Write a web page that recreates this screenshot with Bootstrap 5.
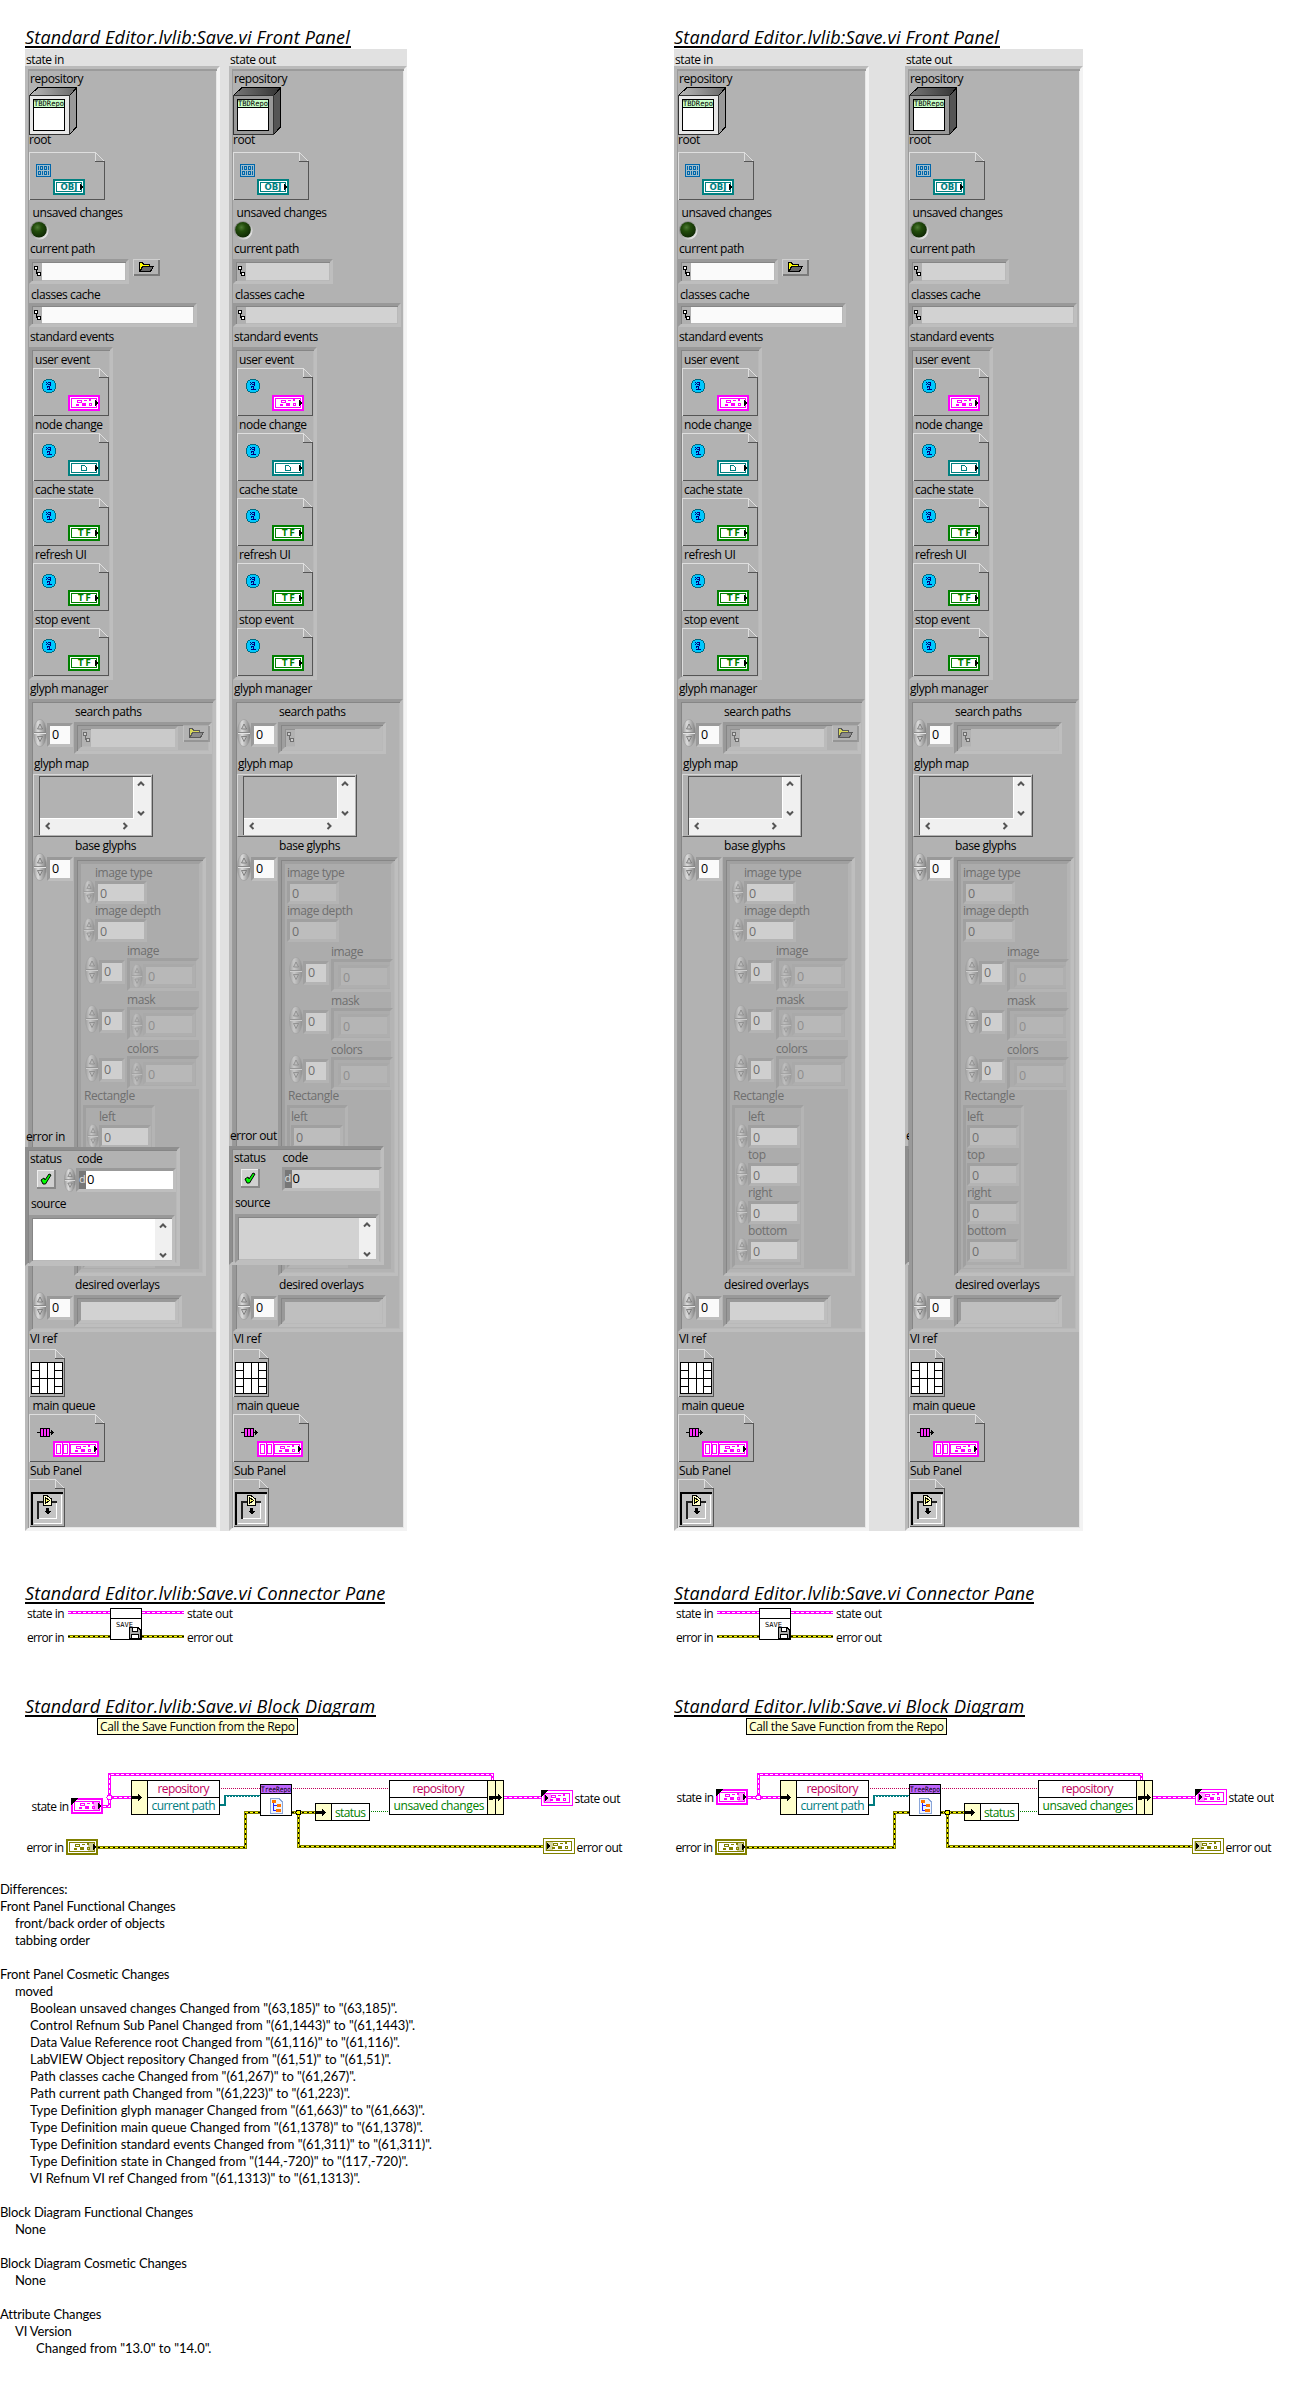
<!DOCTYPE html>
<html lang="en">
<head>
<meta charset="utf-8">
<title>Standard Editor.lvlib:Save.vi</title>
<link href="https://cdn.jsdelivr.net/npm/bootstrap@5.3.0/dist/css/bootstrap.min.css" rel="stylesheet">
<style>
body{font-family:"Open Sans","Noto Sans",sans-serif;font-size:12px;line-height:12px;color:#000}
.side{width:649px;padding-left:25px;flex:none}
.vi-title{font:italic 18px/18px "Open Sans",sans-serif;letter-spacing:.2px;border-bottom:2px solid #000;margin:0;white-space:nowrap}
.title-fp{width:326px;margin-top:28px;margin-bottom:1px}
.title-cp{width:360px;margin-top:53px}
.title-bd{width:351px;margin-top:33px;overflow:hidden}
.canvas{background:#e1e1e1;height:1482px}
.canvas.near{width:382px;gap:9px}
.canvas.far{width:409px;gap:36px}
.cluster-col{padding-top:4px}
.cap{height:12px;line-height:14px;white-space:nowrap;letter-spacing:-.42px;flex:none}
.cluster-col>.cap{padding-left:1px;margin-bottom:1px}
.panel{height:1465px;border:3px solid;border-color:#bababa #f3f3f3 #f3f3f3 #bababa;box-shadow:inset 1px 2px 0 #9b9b9b,inset -1px -1px 0 #e6e6e6;background:#b2b2b2;padding:1px;position:relative}
.panel.in{width:195px}.panel.out{width:178px}
.sp-1{margin-top:1px}.sp-2{margin-top:2px}.sp-3{margin-top:3px}.sp-4{margin-top:4px}.sp-5{margin-top:5px}.sp-6{margin-top:6px}.sp-7{margin-top:7px}
.in-0{padding-left:0}.in-1{padding-left:1px}.in-2{padding-left:2px}.in-3{padding-left:3.5px}.in-12{padding-left:12px}.in-42{padding-left:42px}.in-44{padding-left:44px}
svg{display:block;flex:none}
.obj{height:48px;flex:none}
.obj.cube{height:46px}
.led{height:20px}
.well{border:3px solid;border-color:#999 #bebebe #bebebe #999;box-shadow:inset 1px 1px 0 #868686,inset -1px -1px 0 #b9b9b9;flex:none}
.well-body{padding:1px}
.fld{background:#fafafa;white-space:nowrap;overflow:hidden}
.out .fld{background:#d2d2d2}
.pathctl{width:100px;height:25px}.pathctl.wide{width:168px;height:24px}
.pathctl .tag{width:9px;background:#b0b0b0;padding:3px 0 0 1px;margin:1px 0 0 1px}
.pathctl .fld{margin:1px 1px 1px 0}
.events{width:84px;height:333px}
.gm{height:633px}
.arr{height:36px}
.idx{width:26px;height:24px;margin-top:4px;border:3px solid;border-color:#999 #bebebe #bebebe #999;background:#fafafa;padding:3px 0 0 2px;letter-spacing:-.4px;font-size:12.5px;flex:none}
.arr-frame{margin:3px 0 0 1px;height:32px;width:108px}
.arr-frame.btn-room{width:138px}
.arr-frame .well{margin:1px;width:100px;height:24px}
.arr-frame .fld{background:#d2d2d2;flex:1 1 auto}
.out .arr-frame .fld{background:#bfbfbf}
.arr-frame .tag{width:10px;padding:3px 0 0 2px}
.map{width:120px;height:63px;border:1px solid;border-color:#d8d8d8 #555 #555 #d8d8d8;padding:1px 2px 2px 5px}
.map-in{border:solid #555;border-width:1px 0 0 1px;height:59px;width:112px;background:#f0f0f0}
.map-view{width:93px;height:41px;background:#b2b2b2;border-right:1px solid #fff;border-bottom:1px solid #fff;box-sizing:content-box}
.bg-row{height:423px}
.bg-frame{margin:4px 0 0 1px;height:419px;width:132px;background:#acacac}
.out .bg-frame{width:120px}
.bg-frame>.well{margin:1px;height:411px;padding-left:2px;border-color:#a0a0a0 #b8b8b8 #b8b8b8 #a0a0a0;box-shadow:none}
.dim .cap,.dim .num{color:#6f6f6f}
.dim .well,.dim .num,.dim .idx{border-color:#a0a0a0 #b4b4b4 #b4b4b4 #a0a0a0;box-shadow:none}
.dim .nrow svg,.dim .sub-arr>svg{opacity:.6}
.nrow{height:24px}
.num{width:52px;height:23px;margin-top:1px;border:3px solid;background:#cfcfcf;padding:4px 0 0 2px;flex:none;font-size:12.5px}
.out .dim .num{background:#bdbdbd}
.arrays{height:147px;padding-top:2px}
.out .arrays{padding-top:3px}
.dim .idx{background:#cfcfcf;color:#6f6f6f}
.sub-arr{height:36px;margin-bottom:1px;padding-left:2px}
.sub-frame{width:72px;height:33px;margin:2px 0 0 2px;padding:3px 0 0 1px;background:#acacac}
.out .sub-frame{width:62px;padding-left:0}
.sub-frame .num{margin-top:0;height:23px;background:#b8b8b8;color:#8e8e8e;border-color:#a9a9a9 #afafaf #afafaf #a9a9a9}
.out .dim .sub-frame .num{background:#b5b5b5}
.sub-frame svg{opacity:.4}
.rect{width:72px;height:163px}
.out .rect{width:61px}
.rect .well-body{padding:2px 1px}
.overlay{position:absolute;left:-3px;top:1061px;width:155px;z-index:2}
.out .overlay{top:1060px}
.overlay.peek{width:4px;overflow:hidden}
.err{width:155px;height:119px;margin-top:5px;background:#b2b2b2;border-color:#8e8e8e #bebebe #bebebe #8e8e8e;padding:2px 0 0 1px}
.err-top{height:41px}
.e-status{width:35px;padding-left:1px}
.out .e-status{width:37px}
.codectl{width:100px;height:24px;margin-top:4px}
.codectl .tag{width:7px;background:#777;color:#ddd;font-size:11px;line-height:16px}
.codectl .fld{background:#fff;font-size:13px;line-height:17px;padding-left:1px}
.out .codectl .fld{background:#d2d2d2}
.source{width:146px;height:49px;margin-top:6px;background:#fff}
.out .source{background:#d2d2d2;margin-left:2px;width:144px}
.report{font:13px/17px Lato,sans-serif;letter-spacing:-.15px;height:511px;white-space:nowrap;padding-top:1px}
.ind{padding-left:15px}
.ind .ind{letter-spacing:-.03px}
.ind-x{padding-left:21px;letter-spacing:0}
</style>
</head>
<body class="bg-white overflow-hidden">
<svg width="0" height="0" class="position-absolute" shape-rendering="crispEdges">
<defs>
<linearGradient id="metal" x1="0" x2="1"><stop offset="0" stop-color="#989898"/><stop offset=".35" stop-color="#dcdcdc"/><stop offset="1" stop-color="#7c7c7c"/></linearGradient>
<linearGradient id="topL" x1="0" x2="1"><stop offset="0" stop-color="#bbb"/><stop offset="1" stop-color="#666"/></linearGradient>
<linearGradient id="topD" x1="0" x2="1"><stop offset="0" stop-color="#777"/><stop offset="1" stop-color="#333"/></linearGradient>
<radialGradient id="ledg" cx=".4" cy=".35" r=".65"><stop offset="0" stop-color="#4d7a33"/><stop offset=".4" stop-color="#234d0c"/><stop offset="1" stop-color="#102a04"/></radialGradient>
<linearGradient id="ledr" x1="0" y1="0" x2="1" y2="1"><stop offset="0" stop-color="#777"/><stop offset=".5" stop-color="#aaa"/><stop offset="1" stop-color="#fff"/></linearGradient>
<symbol id="spin" viewBox="0 0 14 28"><g shape-rendering="auto"><ellipse cx="7" cy="14" rx="6.6" ry="13.6" fill="url(#metal)" stroke="#999" stroke-width=".6"/><path d="M1 13.5H13" stroke="#888"/><path d="M1 14.5H13" stroke="#e4e4e4"/><path d="M7 5L9.500 10H4.500Z" fill="#c6c6c6" stroke="#666" stroke-width=".7"/><path d="M4.500 17.500H9.500L7 22.500Z" fill="#c6c6c6" stroke="#666" stroke-width=".7"/></g></symbol>
<symbol id="pth" viewBox="0 0 7 11"><path d="M.5.5h3v3h-3zM3.500 6.500h3v3h-3zM2.500 4v3.500h1" fill="#fff" stroke="#000"/></symbol>
<symbol id="folder" viewBox="0 0 27 17"><path d="M0 0H27V17H0Z" fill="#b4b4b4"/><path d="M0 .5H27M.5 0V17" stroke="#cfcfcf"/><path d="M1 16H27M26 1V17" stroke="#7a7a7a" stroke-width="2"/><path d="M6.500 12.500V3.500H9.500L10.500 5.500H16.500V7" fill="#ff0" stroke="#000"/><path d="M7 12.500L9.500 7.500H20.500L17.500 12.500Z" fill="#666" stroke="#000"/></symbol>
<symbol id="page76" viewBox="0 0 76 48"><path d="M.5 48V.5H66.500V9.500M66.500 .5L75.500 9.500" fill="none" stroke="#dedede"/><path d="M66 9.500H75.500V47.500H1" fill="none" stroke="#555"/></symbol>
<symbol id="page36" viewBox="0 0 36 48"><path d="M.5 48V.5H26.500V9.500M26.500 .5L35.500 9.500" fill="none" stroke="#dedede"/><path d="M26 9.500H35.500V47.500H1" fill="none" stroke="#555"/></symbol>
<symbol id="box" viewBox="0 0 32 16"><path d="M0 0H32V16H0Z" fill="currentColor"/><path d="M2 2H30V14H2Z" fill="#fff"/><path d="M3.500 3.500H28.500V12.500H3.500Z" fill="#fff" stroke="currentColor"/></symbol>
<symbol id="arw" viewBox="0 0 3 6"><path d="M0 0H1V1H2V2H3V4H2V5H1V6H0Z"/></symbol>
<symbol id="bits" viewBox="0 0 16 8"><path d="M1 1h5v3h-5zM2 2v1h3v-1zM8 1h3v1h-3zM13 0h2v2h-2zM13 4h3v3h-3zM14 5v1h1v-1zM6 4h4v3h-4zM0 5h3v2h-3z" fill="currentColor" fill-rule="evenodd"/></symbol>
<symbol id="evt" viewBox="0 0 14 14"><path d="M4 0H10V1H12V2H13V4H14V10H13V12H12V13H10V14H4V13H2V12H1V10H0V4H1V2H2V1H4Z" fill="#006a80"/><path d="M4 1H10V2H12V4H13V10H12V12H10V13H4V12H2V10H1V4H2V2H4Z" fill="#00c8ff"/><path d="M4 3h1v1h-1zM5 4h1v1h-1zM4 5h1v1h-1zM6 3h3v1h-3zM8 4h1v3h-1zM6 5h2v1h-2zM5 7h3v1h-3zM5 8h1v1h-1zM7 8h1v3h-1zM5 10h5v1h-5z" fill="#000080"/></symbol>
<symbol id="t-clu" viewBox="0 0 32 16"><g color="#f0f"><use href="#box" width="32" height="16"/><use href="#bits" x="8" y="4" width="16" height="8"/></g><use href="#arw" x="27" y="5" width="3" height="6"/></symbol>
<symbol id="t-ref" viewBox="0 0 32 16"><g color="#008080"><use href="#box" width="32" height="16"/><path d="M13.500 5.500H16.500L18.500 7.500V10.500H13.500Z" fill="none" stroke="#008080"/></g><use href="#arw" x="27" y="5" width="3" height="6"/></symbol>
<symbol id="t-tf" viewBox="0 0 32 16"><g color="#008000"><use href="#box" width="32" height="16"/></g><text x="10" y="11" font-family="DejaVu Sans" font-weight="bold" font-size="8" fill="#008000" textLength="13">TF</text><use href="#arw" x="27" y="5" width="3" height="6"/></symbol>
<symbol id="t-obj" viewBox="0 0 32 16"><g color="#008080"><use href="#box" width="32" height="16"/></g><text x="7.500" y="11" font-family="DejaVu Sans" font-weight="bold" font-size="8" fill="#008080" textLength="17" lengthAdjust="spacingAndGlyphs">OBJ</text><use href="#arw" x="27" y="5" width="3" height="6"/></symbol>
<symbol id="t-in" viewBox="0 0 32 16"><use href="#box" width="32" height="16"/><use href="#bits" x="8" y="4" width="16" height="8"/><path d="M22 3H29V13H22Z" fill="currentColor" opacity=".4"/><use href="#arw" x="27" y="5" width="3" height="6"/></symbol>
<symbol id="t-out" viewBox="0 0 32 16"><path d="M.5.5H31.500V15.500H.5ZM3.500 3.500H28.500V12.500H3.500Z" fill="#fff" stroke="currentColor"/><use href="#bits" x="9" y="4" width="16" height="8"/><path d="M2 3H10V13H2Z" fill="currentColor" opacity=".35"/><use href="#arw" x="4" y="5" width="3" height="6"/></symbol>
<symbol id="up" viewBox="0 0 8 6"><path d="M1 5L4 2L7 5" fill="none" stroke="#555" stroke-width="2" shape-rendering="auto"/></symbol>
<symbol id="save" viewBox="0 0 32 32"><path d="M.5.5H31.500V31.500H.5ZM0 10.500H32" fill="#fff" stroke="#000"/><text x="6" y="19" font-family="DejaVu Sans Mono" font-size="7" textLength="17" lengthAdjust="spacingAndGlyphs">SAVE</text><path d="M19.500 19.500H28L30.500 22V30.500H19.500Z" fill="#aaa" stroke="#000"/><path d="M22.500 19.500H27.500V23.500H22.500ZM21.500 26.500H28.500V30.500H21.500Z" fill="#fff" stroke="#000"/></symbol>
<symbol id="tree" viewBox="0 0 32 32"><path d="M.5.5H31.500V31.500H.5Z" fill="#fff" stroke="#000"/><path d="M1 1H31V9H1Z" fill="#bf66ff"/><path d="M0 9.500H32" stroke="#000"/><text x="1" y="8" font-family="DejaVu Sans Mono" font-size="7.500" textLength="30" lengthAdjust="spacingAndGlyphs">TreeRepo</text><path d="M10.500 14.500H19L22.500 18V29.500H10.500Z" fill="#eef4ff" stroke="#8aa6d8"/><path d="M13.500 17V26.500H17M13.500 21.500H17" fill="none" stroke="#22f"/><path d="M12 16h4v3h-4zM17 19.500h4v3.500h-4zM16 25h5v3h-5z" fill="#f70"/></symbol>
</defs>
</svg>

<div id="compare" class="d-flex"></div>

<div class="report">
<div>Differences:</div>
<div>Front Panel Functional Changes</div>
<div class="ind"><div>front/back order of objects</div><div>tabbing order</div></div>
<br>
<div>Front Panel Cosmetic Changes</div>
<div class="ind"><div>moved</div>
<div class="ind">
<div>Boolean unsaved changes Changed from "(63,185)" to "(63,185)".</div>
<div>Control Refnum Sub Panel Changed from "(61,1443)" to "(61,1443)".</div>
<div>Data Value Reference root Changed from "(61,116)" to "(61,116)".</div>
<div>LabVIEW Object repository Changed from "(61,51)" to "(61,51)".</div>
<div>Path classes cache Changed from "(61,267)" to "(61,267)".</div>
<div>Path current path Changed from "(61,223)" to "(61,223)".</div>
<div>Type Definition glyph manager Changed from "(61,663)" to "(61,663)".</div>
<div>Type Definition main queue Changed from "(61,1378)" to "(61,1378)".</div>
<div>Type Definition standard events Changed from "(61,311)" to "(61,311)".</div>
<div>Type Definition state in Changed from "(144,-720)" to "(117,-720)".</div>
<div>VI Refnum VI ref Changed from "(61,1313)" to "(61,1313)".</div>
</div></div>
<br>
<div>Block Diagram Functional Changes</div>
<div class="ind">None</div>
<br>
<div>Block Diagram Cosmetic Changes</div>
<div class="ind">None</div>
<br>
<div>Attribute Changes</div>
<div class="ind"><div>VI Version</div><div class="ind-x">Changed from "13.0" to "14.0".</div></div>
</div>

<script src="https://cdn.jsdelivr.net/npm/bootstrap@5.3.0/dist/js/bootstrap.bundle.min.js"></script>
<script>
const svg = (w, h, body, cls = '') => `<svg width="${w}" height="${h}" viewBox="0 0 ${w} ${h}" shape-rendering="crispEdges" class="${cls}">${body}</svg>`;
const use = (id, x, y, w, h) => `<use href="#${id}" x="${x}" y="${y}" width="${w}" height="${h}"/>`;
const cap = (t, cls) => `<div class="cap ${cls}">${t}</div>`;
const spin = small => small ? svg(12, 24, use('spin', 0, 0, 12, 24)) : svg(14, 28, use('spin', 0, 0, 14, 28));
const tag = dim => `<div class="tag${dim ? ' opacity-50' : ''}">${svg(7, 11, use('pth', 0, 0, 7, 11))}</div>`;

const cube = out => svg(48, 48, `
  <path d="M.5 8.500L9 .5H47.500V40L40.500 47.500V8.500Z" fill="url(#${out ? 'topD' : 'topL'})" stroke="#000"/>
  <path d="M40.500 8.500L47.500 1V40L40.500 47.500Z" fill="${out ? '#555' : '#999'}" stroke="#000"/>
  <path d="M.5 8.500H40.500V47.500H.5Z" fill="${out ? '#999' : '#e8e8e8'}" stroke="#333"/>
  <path d="M4.500 12.500H35.500V43.500H4.500Z" fill="#fff" stroke="#000"/><path d="M5 13H35V20H5Z" fill="#c8ffc8"/><path d="M5 20.500H35" stroke="#000"/>
  <text x="5" y="19" font-family="DejaVu Sans Mono" font-size="7.500" textLength="30" lengthAdjust="spacingAndGlyphs">TBDRepo</text>`);
const rootObj = svg(76, 48, use('page76', 0, 0, 76, 48) + `
  <path d="M7.500 12.500H21.500V24.500H7.500Z" fill="#9fbccb" stroke="#06a"/>
  <path d="M9.500 14v4M11.500 14.500v3h2v-3zM15.500 14.500v3h2v-3zM19.500 14v4M9.500 19.500v3h2v-3zM13.500 19v4M15.500 19.500v3h2v-3zM19.500 19v4" fill="none" stroke="#06a"/>` + use('t-obj', 24, 27, 32, 16));
const event = t => svg(76, 48, use('page76', 0, 0, 76, 48) + use('evt', 9, 11, 14, 14) + use(t, 35, 27, 32, 16));
const viref = svg(36, 48, use('page36', 0, 0, 36, 48) + `<path d="M2.500 13.500H33.500V44.500H2.500ZM10.500 13V45M18.500 13V45M25.500 13V45M2 29.500H34M2 21.500H10M26 21.500H34M2 37.500H10M26 37.500H34" fill="#fff" stroke="#000"/>`);
const queue = svg(76, 48, use('page76', 0, 0, 76, 48) + `
  <path d="M8 18.500H24M22 16.500L24 18.500L22 20.500" fill="none" stroke="#000"/><path d="M11.500 14.500H20.500V22.500H11.500ZM14.500 14V23M17.500 14V23" fill="#f3f" stroke="#000"/>
  <path d="M24 27H70V43H24Z" fill="#f0f"/><path d="M26 29H68V41H26Z" fill="#fff"/>
  <path d="M27.500 30.500H31.500V39.500H27.500ZM34.500 30.500H38.500V39.500H34.500ZM41.500 30.500H66.500V39.500H41.500ZM33 29V41M40 29V41" fill="none" stroke="#f0f"/>
  <g color="#f0f">${use('bits', 46, 31, 16, 8)}</g>` + use('arw', 65, 32, 3, 6));
const subp = svg(36, 48, use('page36', 0, 0, 36, 48) + `
  <path d="M3 14H34V45H3Z" fill="#c4c4c4"/><path d="M3 46V14H34" fill="none" stroke="#000" stroke-width="2"/><path d="M5 44.500H32.500V16" fill="none" stroke="#fff"/>
  <path d="M9 40V23H15M22 22.500H28" fill="none" stroke="#222" stroke-width="2"/><path d="M10 39.500H27.500V24" fill="none" stroke="#fff"/>
  <path d="M14.500 16.500H18L22.500 20V26.500H14.500Z" fill="#ffc" stroke="#000"/><path d="M16.500 18.500L20.500 21.500L16.500 24.500Z" fill="#ff6" stroke="#000"/>
  <path d="M17 29H20V32H22L18.500 35.500L15 32H17Z" fill="#000"/>`);
const led = svg(20, 20, `<g shape-rendering="auto"><circle cx="10.300" cy="10.300" r="9.300" fill="url(#ledr)"/><circle cx="10" cy="9.700" r="7.800" fill="url(#ledg)"/></g>`);
const folder = svg(27, 17, use('folder', 0, 0, 27, 17));
const arrow = (deg, x, y) => `<g transform="translate(${x} ${y}) rotate(${deg})"><use href="#up" x="-4" y="-3.500" width="8" height="6"/></g>`;

const pathCtl = wide => `<div class="well pathctl ${wide ? 'wide' : ''} d-flex">${tag()}<div class="fld flex-fill"></div></div>`;
const numRow = (inp) => `<div class="nrow sp-2 d-flex">${inp ? spin(true) : ''}<div class="num">0</div></div>`;
const subArr = (name, inp) => cap(name, 'in-44') + `<div class="sub-arr d-flex">${spin()}<div class="idx">0</div>
  <div class="well sub-frame d-flex">${inp ? spin(true) : '<span class="ps-1"></span>'}<div class="num">0</div></div></div>`;

const glyphManager = inp => `<div class="well gm sp-5"><div class="well-body">
  ${cap('search paths', 'in-42 sp-2')}
  <div class="arr d-flex sp-2">${spin()}<div class="idx">0</div>
    <div class="well arr-frame d-flex ${inp ? 'btn-room' : ''}"><div class="well d-flex opacity-75">${tag(true)}<div class="fld"></div></div>${inp ? `<div class="opacity-50 ps-1">${folder}</div>` : ''}</div></div>
  ${cap('glyph map', 'in-1 sp-2')}
  <div class="map sp-5"><div class="map-in position-relative"><div class="map-view"></div>
    ${svg(111, 58, arrow(0, 101, 7) + arrow(180, 101, 36) + arrow(270, 8, 49) + arrow(90, 85, 49), 'position-absolute top-0 start-0')}</div></div>
  ${cap('base glyphs', 'in-42 sp-2')}
  <div class="bg-row d-flex sp-2">${spin()}<div class="idx">0</div>
    <div class="well bg-frame dim"><div class="well">
      ${cap('image type', (inp ? 'in-12' : 'in-0') + ' sp-2')}${numRow(inp)}
      ${cap('image depth', inp ? 'in-12' : 'in-0')}${numRow(inp)}
      <div class="arrays">${subArr('image', inp)}${subArr('mask', inp)}${subArr('colors', inp)}</div>
      ${cap('Rectangle', 'in-1')}
      <div class="well rect sp-4"><div class="well-body">${['left', 'top', 'right', 'bottom'].map(n => cap(n, inp ? 'in-12' : 'in-0') + numRow(inp)).join('')}</div></div>
    </div></div></div>
  ${cap('desired overlays', 'in-42 sp-2')}
  <div class="arr d-flex sp-2">${spin()}<div class="idx">0</div><div class="well arr-frame"><div class="well d-flex"><div class="fld"></div></div></div></div>
</div></div>`;

const errorCluster = (inp, cls) => `<div class="overlay ${cls}">${cap(inp ? 'error in' : 'error out', 'in-1')}
  <div class="well err"><div class="d-flex err-top">
    <div class="e-status">${cap('status', 'in-0')}${svg(26, 25, `<path d="M7 6H26V25H7Z" fill="#d0d0d0"/><path d="M7 6.500H25M7.500 6V24" stroke="#eee"/><path d="M7 24H26M25 6V25" stroke="#888" stroke-width="2"/><path d="M11 16L14 14L15 16L19 10L21 11L15.500 20H13Z" fill="#0f0" stroke="#000" shape-rendering="auto"/>`)}</div>
    <div class="d-flex">${inp ? `<div class="pt-3">${spin(true)}</div>` : '<div class="ps-3"></div>'}
    <div>${cap('code', 'in-1')}<div class="well codectl d-flex"><div class="tag">d</div><div class="fld flex-fill">0</div></div></div></div></div>
    ${cap('source', 'in-2 sp-4')}
    <div class="well source d-flex justify-content-end">${svg(17, 42, `<path d="M0 1H17V42H0Z" fill="#f0f0f0"/>` + arrow(0, 8, 8) + arrow(180, 8, 37))}</div>
  </div></div>`;

const panel = (inp, err) => `<div class="cluster-col">${cap(inp ? 'state in' : 'state out', '')}
<div class="panel ${inp ? 'in' : 'out'}">
  ${cap('repository', 'in-1 sp-2')}<div class="obj cube sp-3">${cube(!inp)}</div>
  ${cap('root', 'in-0')}<div class="obj sp-7">${rootObj}</div>
  ${cap('unsaved changes', 'in-3 sp-6')}<div class="led sp-2">${led}</div>
  ${cap('current path', 'in-1 sp-2')}<div class="d-flex gap-1 sp-5">${pathCtl()}${inp ? folder : ''}</div>
  ${cap('classes cache', 'in-2 sp-4')}<div class="sp-3">${pathCtl(true)}</div>
  ${cap('standard events', 'in-1 sp-3')}
  <div class="well events sp-5"><div class="well-body">
    ${[['user event', 't-clu'], ['node change', 't-ref'], ['cache state', 't-tf'], ['refresh UI', 't-tf'], ['stop event', 't-tf']].map(([n, t]) => cap(n, 'in-2 sp-2') + `<div class="obj sp-3">${event(t)}</div>`).join('')}
  </div></div>
  ${cap('glyph manager', 'in-1 sp-2')}${glyphManager(inp)}
  ${cap('VI ref', 'in-1')}<div class="obj sp-5">${viref}</div>
  ${cap('main queue', 'in-3 sp-2')}<div class="obj sp-3">${queue}</div>
  ${cap('Sub Panel', 'in-1 sp-2')}<div class="obj sp-3">${subp}</div>
  ${err === null ? '' : errorCluster(inp, err)}
</div></div>`;

const wire = (d, light, dark, w = 3) => `<path d="${d}" fill="none" stroke="${dark}" stroke-width="${w}"/><path d="${d}" fill="none" stroke="${light}" stroke-dasharray="3 2"/>`;
const pink = d => wire(d, '#fff', '#f0f', 3);
const gold = d => `<path d="${d}" fill="none" stroke="#808000" stroke-width="3"/><path d="${d}" fill="none" stroke="#ff0"/><path d="${d}" fill="none" stroke="#000" stroke-dasharray="2 3"/>`;
const txt = (t, x, y, w, c = '#000') => `<text x="${x}" y="${y}" textLength="${w}" fill="${c}">${t}</text>`;

const connector = `<svg width="600" height="60" viewBox="25 1604 600 60" font-size="12" shape-rendering="crispEdges">
  ${pink('M68 1612.500H110M142 1612.500H184')}${gold('M68 1636.500H110M142 1636.500H184')}
  ${use('save', 110, 1608, 32, 32)}
  ${txt('state in', 27, 1617.5, 37.5)}${txt('error in', 27, 1641.5, 37.5)}${txt('state out', 187, 1617.5, 46)}${txt('error out', 187, 1641.5, 46)}</svg>`;

const diagram = p => `<svg width="600" height="163" viewBox="25 1717 600 163" font-size="12" shape-rendering="crispEdges">
  <path d="M97.500 1718.500H297.500V1734.500H97.500Z" fill="#ffffd2" stroke="#000"/>${txt('Call the Save Function from the Repo', 100, 1731, 195)}
  ${pink(`M${p.inX + 32} ${p.inY + 8.5}H109.500V1774.500H492.500V1780`)}${pink('M109 1797.500H131M504 1797.500H' + p.outX)}
  <circle cx="109.500" cy="1797.500" r="2.500" fill="#fff" stroke="#f0f"/>
  ${gold('M98 1847.500H245.500V1812.500H260M292 1812.500H315M298.500 1812V1846.500H543')}
  <circle cx="298.500" cy="1812.500" r="2.500" fill="#ff0" stroke="#000"/>
  <path d="M221 1788.500H260M293 1788.500H389" stroke="#c0005c" stroke-dasharray="1 1"/>
  <path d="M371 1811.500H389" stroke="#008000" stroke-dasharray="1 1"/>
  <path d="M220 1805H225V1796H260" fill="none" stroke="#007c80" stroke-width="2"/><path d="M226 1796.500H260" stroke="#fff" stroke-dasharray="1 2"/>
  <path d="M131.500 1780.500H219.500V1814.500H131.500Z" fill="#fff"/><path d="M132 1781H147V1814H132Z" fill="#ffc"/>
  <path d="M131.500 1780.500H219.500V1814.500H131.500ZM147.500 1780V1815M147 1797.500H220" fill="none" stroke="#000"/>
  <path d="M389.500 1780.500H503.500V1814.500H389.500Z" fill="#fff"/><path d="M488 1781H503V1814H488Z" fill="#ffc"/>
  <path d="M389.500 1780.500H503.500V1814.500H389.500ZM487.500 1780V1815M495.500 1780V1815M389 1797.500H487" fill="none" stroke="#000"/>
  <path d="M315.500 1803.500H369.500V1820.500H315.500Z" fill="#fff"/><path d="M316 1804H331V1820H316Z" fill="#ffc"/><path d="M315.500 1803.500H369.500V1820.500H315.500ZM331.500 1803V1820" fill="none" stroke="#000"/>
  <g fill="#000"><path d="M132 1796H138V1793.500L142 1797.500L138 1801.500V1799H132Z"/><path d="M316 1811H322V1808.500L326 1812.500L322 1816.500V1814H316Z"/><path d="M489 1795.500H493V1796H498V1793.500L502 1797.500L498 1801.500V1799H493V1799.500H489Z"/></g>
  ${use('tree', 260, 1784, 32, 32)}
  ${txt('repository', 157.5, 1793, 52, '#c0005c')}${txt('current path', 151.5, 1810, 64, '#007c80')}
  ${txt('repository', 412.5, 1793, 52, '#c0005c')}${txt('unsaved changes', 393.5, 1810, 91, '#008000')}${txt('status', 335, 1816.5, 31, '#008000')}
  <g color="#f0f">${use('t-in', p.inX, p.inY, 32, 16)}${use('t-out', p.outX, p.outY, 32, 16)}</g>
  <path d="M${p.inX} ${p.inY}h8l-8 7zM${p.outX} ${p.outY}h8l-8 7z" fill="#000"/>
  <g color="#808000">${use('t-in', 66, 1839, 32, 16)}${use('t-out', 543, 1838, 32, 16)}</g>
  ${txt('state in', p.inX - 39.5, p.inY + 13, 37.5)}${txt('error in', 26.5, 1851.5, 37.5)}
  ${txt('state out', p.outX + 33.5, p.outY + 13, 46)}${txt('error out', 576.5, 1851.5, 46)}</svg>`;

const side = (cls, errs, pos) => `<section class="side">
  <h2 class="vi-title title-fp">Standard Editor.lvlib:Save.vi Front Panel</h2>
  <div class="canvas ${cls} d-flex">${panel(true, errs[0])}${panel(false, errs[1])}</div>
  <h2 class="vi-title title-cp">Standard Editor.lvlib:Save.vi Connector Pane</h2>
  ${connector}
  <h2 class="vi-title title-bd">Standard Editor.lvlib:Save.vi Block Diagram</h2>
  ${diagram(pos)}
</section>`;

document.getElementById('compare').innerHTML =
  side('near', ['', ''], {inX: 71, inY: 1798, outX: 541, outY: 1790}) +
  side('far', [null, 'peek'], {inX: 67, inY: 1789, outX: 546, outY: 1789});
</script>
</body>
</html>
